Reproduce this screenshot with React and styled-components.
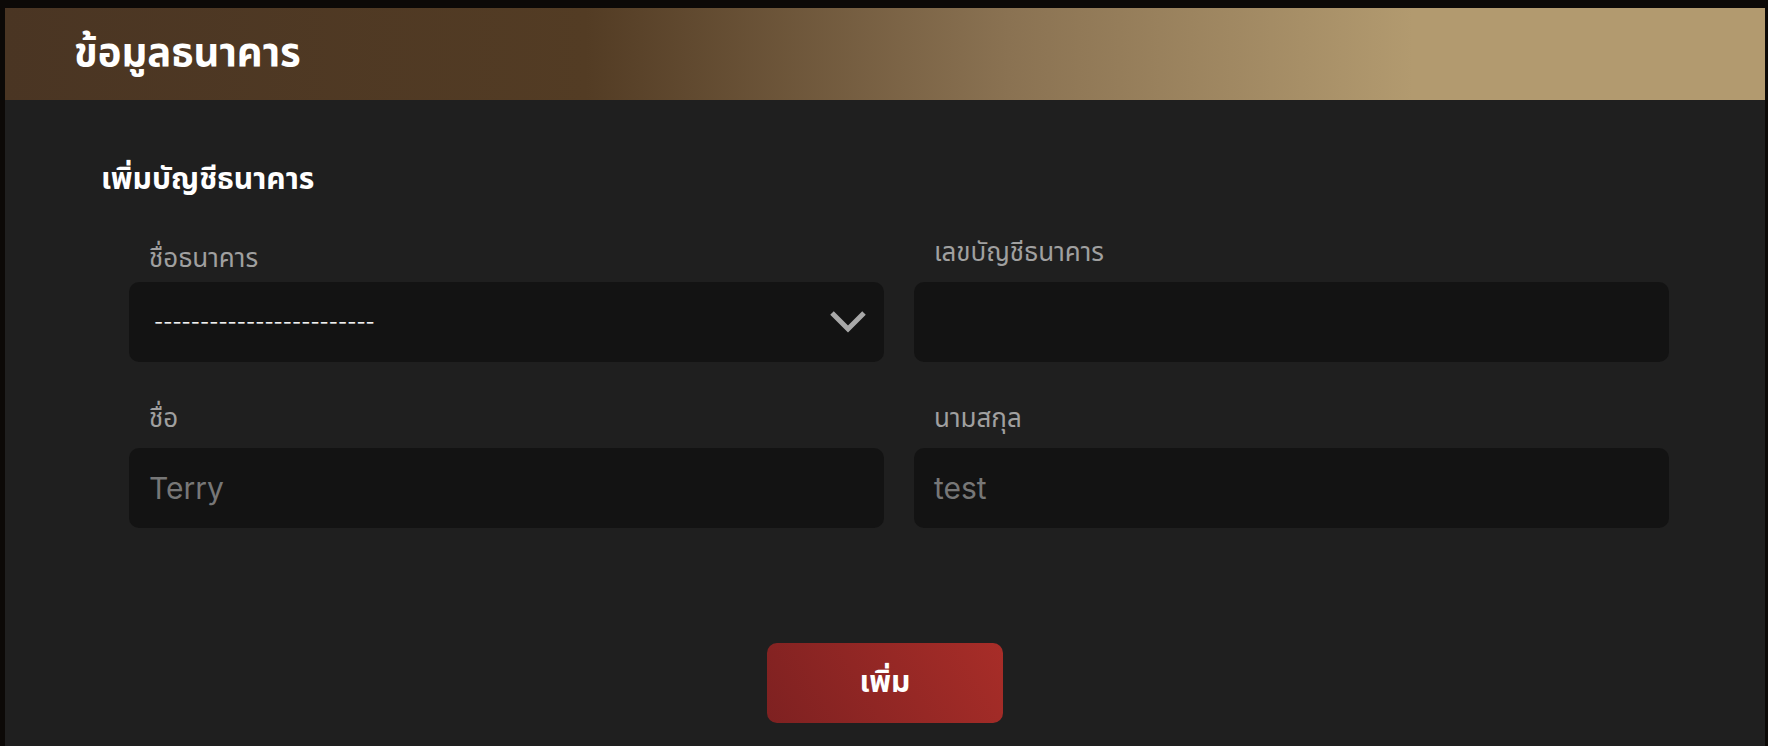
import React from "react";
import styled, { createGlobalStyle } from "styled-components";

const Global = createGlobalStyle`
  html, body { margin: 0; padding: 0; background: #0c0907; }
  body { font-family: "Noto Sans Thai", "Noto Sans", "DejaVu Sans", sans-serif; }
  #root { padding: 8px 3px 0 5px; min-height: 746px; box-sizing: border-box; display: flex; flex-direction: column; }
`;

const Panel = styled.div`
  flex: 1;
  display: flex;
  flex-direction: column;
  background: #1f1f1f;
`;

const Header = styled.div`
  height: 92px;
  display: flex;
  align-items: center;
  padding-left: 69px;
  background: linear-gradient(90deg, #4a3523 0%, #533c24 33%, #8a7252 57%, #b29a6f 80%, #b29a6f 100%);
`;

const Title = styled.h1`
  margin: 0;
  color: #fff;
  font-size: 40px;
  line-height: 50px;
  font-weight: 700;
`;

const Body = styled.div`
  padding: 60px 96px 0 96px;
  display: flex;
  flex-direction: column;
`;

const SectionTitle = styled.h2`
  margin: 0;
  color: #fff;
  font-size: 30px;
  line-height: 40px;
  font-weight: 700;
`;

const FormGrid = styled.div`
  margin: 36px 0 0 28px;
  display: grid;
  grid-template-columns: 1fr 1fr;
  column-gap: 30px;
  row-gap: 40px;
`;

const Field = styled.div`
  display: flex;
  flex-direction: column;
`;

const Label = styled.label`
  color: #a0a0a0;
  font-size: 26px;
  line-height: 34px;
  padding-left: 20px;
  margin-bottom: ${(p) => (p.$low ? "6px" : "12px")};
  margin-top: ${(p) => (p.$low ? "6px" : "0")};
`;

const Box = styled.div`
  position: relative;
  height: 80px;
  background: #131313;
  border-radius: 10px;
  display: flex;
  align-items: center;
  padding: 0 20px;
  box-sizing: border-box;
`;

const Placeholder = styled.span`
  color: #777;
  font-family: "Inter", "Noto Sans", sans-serif;
  font-size: 30px;
`;

const Dashes = styled.span`
  color: #f0f0f0;
  font-family: "Inter", sans-serif;
  font-size: 20px;
  padding-left: 5px;
`;

const Chevron = styled.svg`
  position: absolute;
  right: 16px;
  top: 50%;
  transform: translateY(-50%);
`;

const Footer = styled.div`
  display: flex;
  justify-content: center;
  padding: 0 0 23px;
  margin-top: auto;
`;

const Button = styled.button`
  width: 236px;
  height: 80px;
  border: none;
  border-radius: 10px;
  background: linear-gradient(60deg, #7e2121 0%, #a82d28 100%);
  color: #fff;
  font-family: inherit;
  font-size: 30px;
  font-weight: 700;
`;

export default function App() {
  return (
    <>
      <Global />
      <Panel>
        <Header>
          <Title>ข้อมูลธนาคาร</Title>
        </Header>
        <Body>
          <SectionTitle>เพิ่มบัญชีธนาคาร</SectionTitle>
          <FormGrid>
            <Field>
              <Label $low>ชื่อธนาคาร</Label>
              <Box>
                <Dashes>------------------------</Dashes>
                <Chevron width="40" height="26" viewBox="0 0 40 26">
                  <path d="M4 4 L20 20 L36 4" fill="none" stroke="#a8a8a8" strokeWidth="5" />
                </Chevron>
              </Box>
            </Field>
            <Field>
              <Label>เลขบัญชีธนาคาร</Label>
              <Box />
            </Field>
            <Field>
              <Label>ชื่อ</Label>
              <Box>
                <Placeholder>Terry</Placeholder>
              </Box>
            </Field>
            <Field>
              <Label>นามสกุล</Label>
              <Box>
                <Placeholder>test</Placeholder>
              </Box>
            </Field>
          </FormGrid>
        </Body>
        <Footer>
          <Button>เพิ่ม</Button>
        </Footer>
      </Panel>
    </>
  );
}
